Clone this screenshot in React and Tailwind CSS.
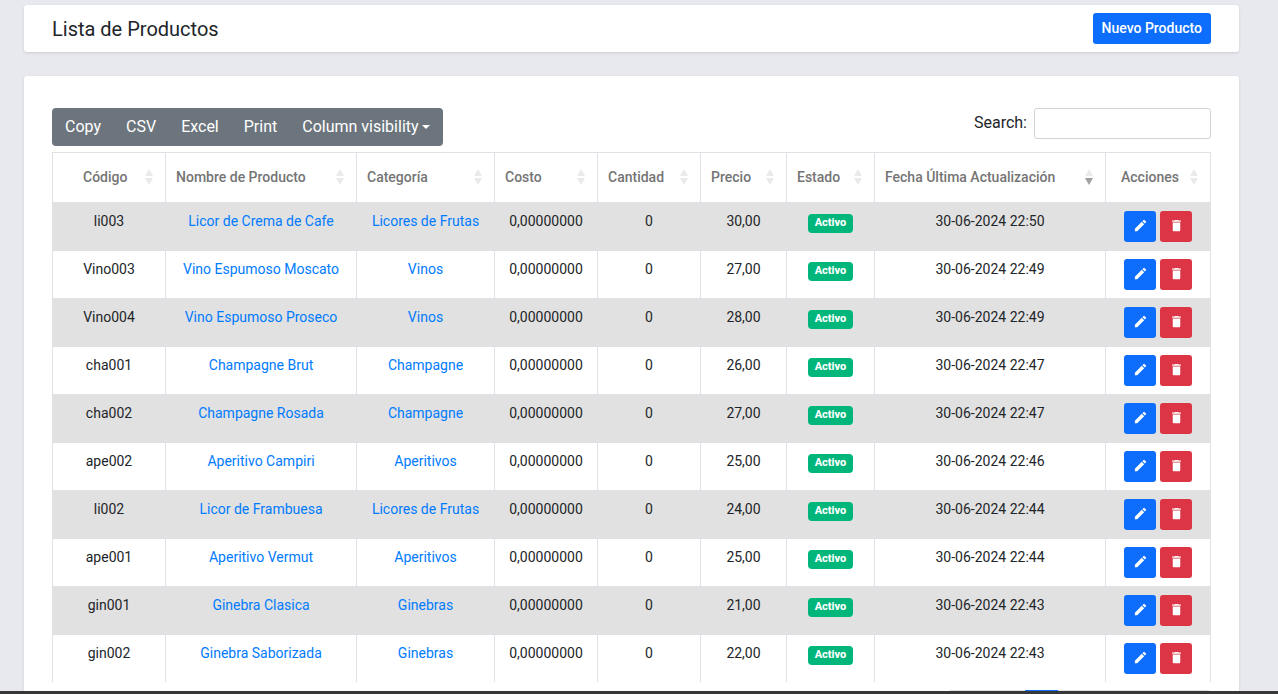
import React from "react";
import { MdDelete, MdEdit } from "react-icons/md";

const columns = [
  { label: "Código", width: "w-[113px]", pad: "pl-[30px]" },
  { label: "Nombre de Producto", width: "w-[191px]", pad: "pl-2.5" },
  { label: "Categoría", width: "w-[138px]", pad: "pl-2.5" },
  { label: "Costo", width: "w-[103px]", pad: "pl-2.5" },
  { label: "Cantidad", width: "w-[103px]", pad: "pl-2.5" },
  { label: "Precio", width: "w-[86px]", pad: "pl-2.5" },
  { label: "Estado", width: "w-[88px]", pad: "pl-2.5" },
  { label: "Fecha Última Actualización", width: "w-[231px]", pad: "pl-2.5", sorted: true },
  { label: "Acciones", width: "w-[105px]", pad: "pl-[15px]" },
];

const products = [
  ["li003", "Licor de Crema de Cafe", "Licores de Frutas", "30,00", "30-06-2024 22:50"],
  ["Vino003", "Vino Espumoso Moscato", "Vinos", "27,00", "30-06-2024 22:49"],
  ["Vino004", "Vino Espumoso Proseco", "Vinos", "28,00", "30-06-2024 22:49"],
  ["cha001", "Champagne Brut", "Champagne", "26,00", "30-06-2024 22:47"],
  ["cha002", "Champagne Rosada", "Champagne", "27,00", "30-06-2024 22:47"],
  ["ape002", "Aperitivo Campiri", "Aperitivos", "25,00", "30-06-2024 22:46"],
  ["li002", "Licor de Frambuesa", "Licores de Frutas", "24,00", "30-06-2024 22:44"],
  ["ape001", "Aperitivo Vermut", "Aperitivos", "25,00", "30-06-2024 22:44"],
  ["gin001", "Ginebra Clasica", "Ginebras", "21,00", "30-06-2024 22:43"],
  ["gin002", "Ginebra Saborizada", "Ginebras", "22,00", "30-06-2024 22:43"],
];

function SortIcon({ sorted }) {
  return (
    <svg width="8" height="16" viewBox="0 0 8 16" aria-hidden="true" className="shrink-0">
      <path d="M4 0L8 7H0z" fill="#e9eaeb" />
      <path d="M0 9H8L4 16z" fill={sorted ? "#a0a0a0" : "#e9eaeb"} />
    </svg>
  );
}

function Cell({ children }) {
  return (
    <td className="border-r border-b border-[#dee2e6] py-2 text-center align-top leading-5 whitespace-nowrap group-last:border-b-0">
      {children}
    </td>
  );
}

function ProductRow({ product }) {
  const [code, name, category, price, date] = product;
  return (
    <tr className="group odd:bg-[#e1e1e1]">
      <Cell>{code}</Cell>
      <Cell><a href="#producto" className="text-[#007bff]">{name}</a></Cell>
      <Cell><a href="#categoria" className="text-[#007bff]">{category}</a></Cell>
      <Cell>0,00000000</Cell>
      <Cell>0</Cell>
      <Cell>{price}</Cell>
      <Cell>
        <div className="flex justify-center pt-[3px]">
          <span className="rounded bg-[#00b67a] px-[7px] pt-px pb-[3px] text-[11px] leading-[15px] font-extrabold text-white">
            Activo
          </span>
        </div>
      </Cell>
      <Cell>{date}</Cell>
      <Cell>
        <div className="flex justify-center gap-1">
          <button type="button" aria-label={`Editar ${name}`} className="flex h-[31px] w-8 items-center justify-center rounded-[3px] bg-[#0d6efd] pb-0.5 text-white">
            <MdEdit size={15} />
          </button>
          <button type="button" aria-label={`Eliminar ${name}`} className="flex h-[31px] w-8 items-center justify-center rounded-[3px] bg-[#dc3545] pb-0.5 text-white">
            <MdDelete size={15} />
          </button>
        </div>
      </Cell>
    </tr>
  );
}

function Pagination() {
  return (
    <nav aria-label="Páginas" className="mt-2 flex justify-end text-base text-[#007bff]">
      <button type="button" className="h-[38px] rounded-l border border-[#dee2e6] px-[7px] text-[#6c757d]">Previous</button>
      <button type="button" aria-current="page" className="h-[38px] w-[33px] bg-[#0d6efd] text-white">1</button>
      {[2, 3, 4].map((page) => (
        <button key={page} type="button" className="h-[38px] w-[33px] border-y border-r border-[#dee2e6]">{page}</button>
      ))}
      <button type="button" className="h-[38px] w-[54px] rounded-r border-y border-r border-[#dee2e6]">Next</button>
    </nav>
  );
}

export default function App() {
  return (
    <div className="flex h-screen flex-col bg-[#e8e9ee] font-[Roboto,sans-serif] text-[#212529]">
      <main className="flex min-h-0 flex-1 flex-col gap-6 overflow-y-auto pt-[5px] pr-[39px] pl-6 [scrollbar-width:none]">
        <header className="flex shrink-0 items-center justify-between rounded-[3px] bg-white px-7 py-2 shadow-[0_1px_3px_rgba(0,0,0,0.12)]">
          <h1 className="text-xl">Lista de Productos</h1>
          <button type="button" className="h-[31px] rounded-[3px] bg-[#0d6efd] px-[9px] pb-0.5 text-sm font-medium text-white">
            Nuevo Producto
          </button>
        </header>

        <section className="shrink-0 rounded-[3px] bg-white px-7 py-8 shadow-[0_1px_3px_rgba(0,0,0,0.12)]">
          <div className="mb-1.5 flex items-start justify-between">
            <div className="flex h-[38px] overflow-hidden rounded bg-[#6c757d] text-base text-white">
              <button type="button" className="px-[13px]">Copy</button>
              <button type="button" className="px-3">CSV</button>
              <button type="button" className="px-[13px]">Excel</button>
              <button type="button" className="px-3">Print</button>
              <button type="button" className="flex items-center gap-[3px] px-[13px]">
                Column visibility
                <svg width="8" height="4" viewBox="0 0 8 4" aria-hidden="true" fill="currentColor">
                  <path d="M0 0h8L4 4z" />
                </svg>
              </button>
            </div>
            <label className="flex items-start gap-[7px] text-base leading-[30px]">
              Search:
              <input type="search" className="h-[31px] w-[177px] rounded-[3px] border border-[#ced4da] bg-white px-2 text-sm outline-none" />
            </label>
          </div>

          <table className="w-full table-fixed border-separate border-spacing-0 border-t border-l border-[#dee2e6] text-sm">
            <colgroup>
              {columns.map((column) => (
                <col key={column.label} className={column.width} />
              ))}
            </colgroup>
            <thead>
              <tr>
                {columns.map((column) => (
                  <th
                    key={column.label}
                    scope="col"
                    aria-sort={column.sorted ? "descending" : "none"}
                    className="h-[50px] border-r border-b border-[#dee2e6] p-0 font-medium text-[#757575]"
                  >
                    <button type="button" className={`flex w-full items-center justify-between pr-3 pb-px whitespace-nowrap ${column.pad}`}>
                      {column.label}
                      <SortIcon sorted={column.sorted} />
                    </button>
                  </th>
                ))}
              </tr>
            </thead>
            <tbody>
              {products.map((product) => (
                <ProductRow key={product[0]} product={product} />
              ))}
            </tbody>
          </table>
          <Pagination />
        </section>
      </main>
      <footer className="h-[3px] shrink-0 bg-[#383838]" />
    </div>
  );
}
